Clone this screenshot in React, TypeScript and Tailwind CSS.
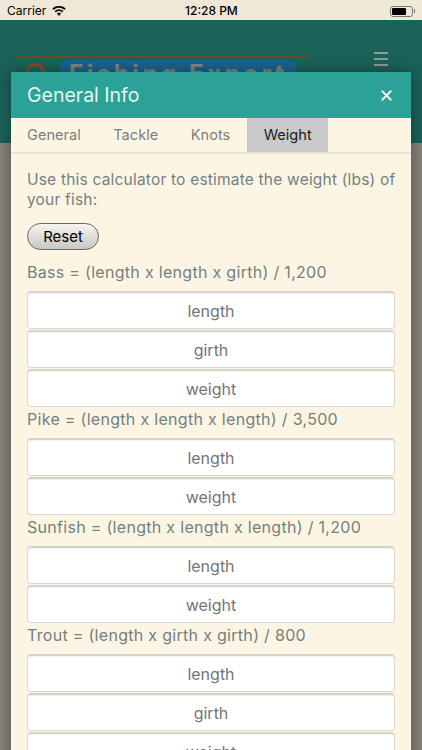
import React from 'react';
import { X } from 'lucide-react';

const sections = [
  { label: 'Bass = (length x length x girth) / 1,200', fields: ['length', 'girth', 'weight'] },
  { label: 'Pike = (length x length x length) / 3,500', fields: ['length', 'weight'] },
  { label: 'Sunfish = (length x length x length) / 1,200', fields: ['length', 'weight'] },
  { label: 'Trout = (length x girth x girth) / 800', fields: ['length', 'girth', 'weight'] },
];

const tabs = ['General', 'Tackle', 'Knots'];

const StatusBar = () => (
  <div className="h-[20px] bg-[#f0e8d6] flex items-center justify-between pl-[7px] pr-[7px] pt-[2px] text-[12px] text-black relative">
    <div className="flex items-center gap-[6px]">
      <span>Carrier</span>
      <svg width="14" height="10" viewBox="0 0 14 10" fill="#111">
        <path d="M7 10 4.900 7.600a3 3 0 0 1 4.200 0z" />
        <path d="M3.800 6.400 2.600 5a6.400 6.400 0 0 1 8.800 0l-1.200 1.400a4.600 4.600 0 0 0-6.400 0z" />
        <path d="M1.600 3.900.3 2.500a9.800 9.800 0 0 1 13.400 0l-1.300 1.400a8 8 0 0 0-10.800 0z" />
      </svg>
    </div>
    <span className="absolute left-[185px] font-medium">12:28 PM</span>
    <div className="flex items-center gap-[1px]">
      <div className="w-[23px] h-[11px] border border-[#777] rounded-[3px] p-[1px]">
        <div className="w-[14px] h-full bg-black rounded-[1px]" />
      </div>
      <div className="w-[1px] h-[4px] bg-[#777]" />
    </div>
  </div>
);

const FieldRow = ({ name }: { name: string }) => (
  <div className="h-[38px] mb-[1px] bg-white rounded-[4px] border border-[#dcd9d2] border-t-2 border-t-[#d5d3ce] shadow-[inset_0_1px_1px_rgba(0,0,0,0.06)] flex items-center justify-center text-[16px] text-[#757575]">
    {name}
  </div>
);

export default function App() {
  return (
    <div className="relative w-[422px] h-[750px] overflow-hidden bg-[#85837a] font-['Inter',sans-serif]">
      <StatusBar />

      {/* page behind the modal */}
      <div className="h-[123px] bg-[#1b6259] pl-[16px] pt-[36px] flex justify-between items-start">
        <div className="w-[292px]">
          <div className="h-[2px] bg-[#6f4a2a] mb-[2px]" />
          <div className="flex items-start gap-[15px] pl-[10px]">
            <div className="w-[19px] h-[19px] rounded-full border-[3px] border-[#8a4a2a] mt-[3px]" />
            <div className="w-[237px] h-[40px] rounded-[8px] bg-[#1c6390] text-[#85857f] text-[24px] leading-[28px] font-bold tracking-[3.6px] pl-[9px]">
              Fishing Expert
            </div>
          </div>
        </div>
        <div className="w-[14px] mr-[34px] mt-[-4px] flex flex-col gap-[4px]">
          <div className="h-[2px] bg-[#8a9f99]" />
          <div className="h-[2px] bg-[#8a9f99]" />
          <div className="h-[2px] bg-[#8a9f99]" />
        </div>
      </div>

      {/* modal */}
      <div className="absolute left-[11px] top-[72px] w-[400px] h-[700px] bg-[#fdf5e4] shadow-[0_0_14px_rgba(0,0,0,0.4)]">
        <div className="h-[46px] bg-[#2aa297] flex items-center justify-between pl-[16px] pr-[16px] pt-[1px]">
          <span className="text-[19.5px] text-[#e6f5ee]">General Info</span>
          <X size={17} strokeWidth={2.5} color="#f3f7ef" />
        </div>
        <div className="h-[36px] flex border-b-2 border-[#e5e2d9] text-[14.6px] text-[#7c7f7d]">
          <div className="flex pl-[16px] gap-[32.5px] items-center pt-[2px]">
            {tabs.map((t) => (
              <span key={t}>{t}</span>
            ))}
          </div>
          <div className="ml-[17px] w-[81px] bg-[#c9c9c9] text-[#1c1c1c] flex items-center justify-center pt-[2px]">Weight</div>
        </div>
        <div className="px-[16px] pt-[16px]">
          <p className="text-[15.5px] leading-[20px] tracking-[0.2px] text-[#72817f] whitespace-nowrap">
            Use this calculator to estimate the weight (lbs) of
            <br />
            your fish:
          </p>
          <button className="mt-[13px] block w-[72px] h-[27px] pt-[2px] rounded-full border border-[#6b675e] bg-gradient-to-b from-[#f6f5f2] to-[#c9c7c2] text-[15px] text-black">
            Reset
          </button>
          {sections.map((s, i) => (
            <div key={s.label}>
              <div className={`text-[16px] leading-[20px] tracking-[0.3px] pt-[1px] text-[#72817f] ${i === 0 ? 'mt-[11px]' : ''} mb-[9px]`}>
                {s.label}
              </div>
              {s.fields.map((f) => (
                <FieldRow key={f} name={f} />
              ))}
            </div>
          ))}
        </div>
      </div>
    </div>
  );
}
